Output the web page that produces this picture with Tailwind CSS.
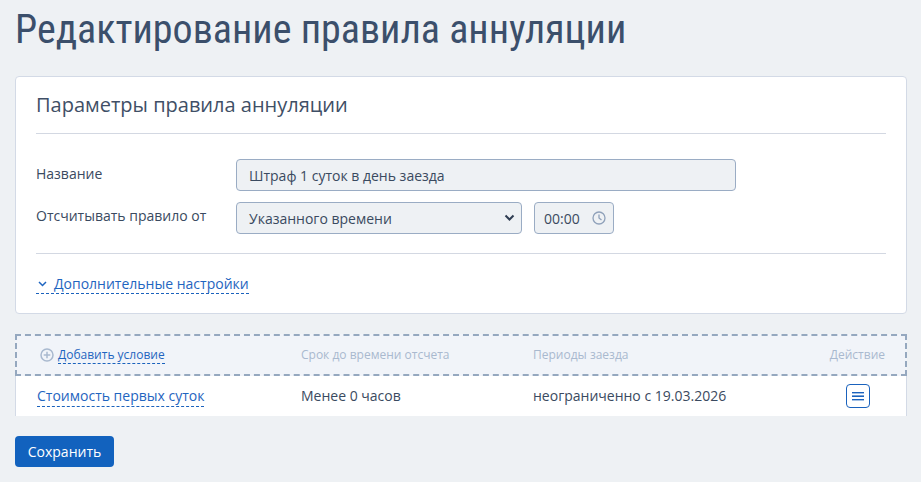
<!DOCTYPE html>
<html lang="ru">
<head>
    <meta charset="UTF-8">
    <title>Редактирование правила аннуляции</title>
    <script src="https://cdn.jsdelivr.net/npm/@tailwindcss/browser@4"></script>
</head>
<body class="bg-[#eef1f4] font-['Open_Sans',sans-serif] text-[14px] text-[#3a4a60] h-[482px] overflow-hidden">
<div class="pl-[15px] pr-[14px]">
    <!-- Title -->
    <h1 class="h-[76px] pt-[6px] font-['Roboto',sans-serif] font-stretch-condensed text-[40px] leading-[47px] text-[#3b4f6b]">Редактирование правила аннуляции</h1>

    <!-- Parameters card -->
    <div class="h-[238px] bg-white border border-[#d3dae6] rounded-[4px] px-5">
        <h2 class="h-[57px] pt-[13px] text-[20px] leading-[30px] border-b border-[#d3d8e2] text-[#3f4f66]">Параметры правила аннуляции</h2>
        <div class="flex mt-[25px] h-[32px]">
            <label class="w-[200px] leading-[30px]">Название</label>
            <div class="w-[500px] h-[32px] px-3 bg-[#eef1f4] border border-[#9aacc4] rounded-[4px] leading-[32px]">Штраф 1 суток в день заезда</div>
        </div>
        <div class="flex mt-[11px] h-[32px]">
            <label class="w-[200px] leading-[28px]">Отсчитывать правило от</label>
            <div class="w-[286px] h-[32px] pl-3 pr-[6px] bg-[#eef1f4] border border-[#9aacc4] rounded-[4px] flex justify-between items-center">
                <span class="pt-[2px] leading-[28px]">Указанного времени</span>
                <svg width="11" height="8" viewBox="0 0 11 8" fill="none" stroke="#2f3d52" stroke-width="2"><path d="M1.500 1.500 5.500 5.500 9.500 1.500"/></svg>
            </div>
            <div class="ml-3 w-[80px] h-[32px] pl-[9px] pr-[7px] bg-[#eef1f4] border border-[#9aacc4] rounded-[4px] flex justify-between items-center">
                <span class="pt-[2px] leading-[28px]">00:00</span>
                <svg width="14" height="14" viewBox="0 0 14 14" fill="none" stroke="#8fa1ba" stroke-width="1.300"><circle cx="7" cy="7" r="6"/><path d="M7 3.500V7l2.500 2"/></svg>
            </div>
        </div>
        <div class="mt-[19px] border-t border-[#d3d8e2]"></div>
        <div class="flex mt-[20px]">
            <a class="flex items-center h-[20px] leading-[20px] border-b border-dashed border-[#1a62bd] text-[#1f65c0]">
                <svg class="mr-[7px] ml-[2px]" width="9" height="6" viewBox="0 0 9 6" fill="none" stroke="#1f65c0" stroke-width="1.500"><path d="M1 1 4.500 4.500 8 1"/></svg>
                Дополнительные настройки
            </a>
        </div>
    </div>

    <!-- Conditions table -->
    <div class="mt-5 h-[82px]">
        <div class="grid grid-cols-[284px_232px_1fr_auto] h-[42px] pr-5 items-center bg-[#f1f4f9] border-2 border-dashed border-[#95a8bf] text-[12px] text-[#a9b9cf]">
            <div class="flex items-center pl-[23px]">
                <svg class="mr-[4px]" width="14" height="14" viewBox="0 0 14 14" fill="none" stroke="#a9b9cf" stroke-width="1.500"><circle cx="7" cy="7" r="6"/><path d="M7 3.700v6.600M3.700 7h6.600"/></svg>
                <a class="leading-[16px] border-b border-dashed border-[#1a62bd] text-[#1f65c0]">Добавить условие</a>
            </div>
            <div>Срок до времени отсчета</div>
            <div>Периоды заезда</div>
            <div>Действие</div>
        </div>
        <div class="grid grid-cols-[264px_232px_1fr_auto] h-[40px] pl-[21px] pr-[36px] items-center bg-white border-x border-[#d3dae6]">
            <div class="flex"><a class="leading-[20px] border-b border-dashed border-[#1a62bd] text-[#1f65c0]">Стоимость первых суток</a></div>
            <div class="pb-[2px]">Менее 0 часов</div>
            <div class="pb-[2px]">неограниченно с 19.03.2026</div>
            <button class="flex items-center justify-center w-[24px] h-[24px] border border-[#1a62bd] rounded-[4px]">
                <svg width="12" height="9" viewBox="0 0 12 9" fill="#1a62bd"><rect y="0" width="12" height="1.400"/><rect y="3.400" width="12" height="1.600"/><rect y="7" width="12" height="1.400"/></svg>
            </button>
        </div>
    </div>

    <!-- Save -->
    <button class="mt-5 w-[99px] h-[31px] bg-[#1262be] text-white rounded-[4px] text-[14px]">Сохранить</button>
</div>
</body>
</html>
